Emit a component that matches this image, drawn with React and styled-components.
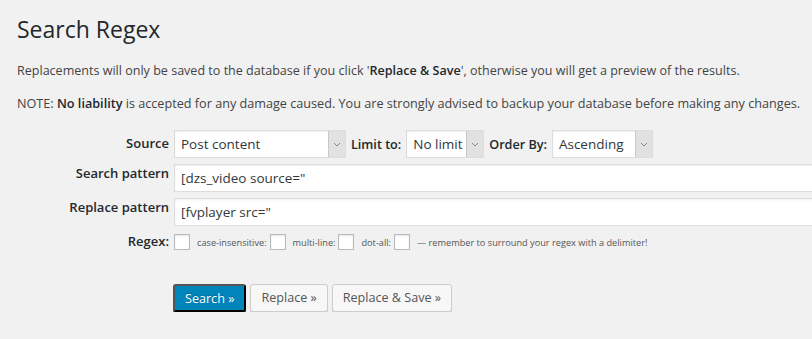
import React from 'react'
import styled, { createGlobalStyle } from 'styled-components'

const GlobalStyle = createGlobalStyle`
body {
  margin: 0;
  background: #f1f1f1;
  font-family: "Open Sans", "Noto Sans", sans-serif;
  color: #444;
  overflow: hidden;
}
`

const Wrap = styled.div`
padding: 13px 0 0 17px;
width: 795px;
overflow: hidden;
`

const Title = styled.h1`
margin: 0;
font-size: 23px;
font-weight: 400;
line-height: 33px;
color: #23282d;
`

const Note = styled.p`
margin: ${p => p.first ? '15px' : '14px'} 0 0;
font-size: ${p => p.first ? '12.55px' : '12.65px'};
line-height: 19px;
white-space: nowrap;
color: #444;
b { font-weight: 600; color: #23282d; }
`

const FormGrid = styled.div`
margin-top: 17px;
display: grid;
grid-template-columns: 152px 1fr;
column-gap: 5px;
row-gap: 6px;
align-items: start;
`

const Label = styled.div`
text-align: right;
font-size: 13px;
font-weight: 600;
color: #23282d;
line-height: 19px;
padding-top: ${p => p.top || 0}px;
`

const Inline = styled.div`
display: flex;
align-items: center;
gap: 5px;
`

const InlineLabel = styled.span`
font-size: 12.6px;
font-weight: 600;
color: #23282d;
`

const SelectBox = styled.div`
width: ${p => p.w}px;
height: 28px;
box-sizing: border-box;
display: flex;
align-items: center;
background: #fff;
border: 1px solid #ddd;
box-shadow: inset 0 1px 2px rgba(0,0,0,.07);
font-size: 13.5px;
color: #32373c;
`

const SelectText = styled.span`
flex: 1;
padding-left: 6px;
white-space: nowrap;
overflow: hidden;
`

const Arrow = styled.span`
width: 16px;
height: 26px;
display: flex;
align-items: center;
justify-content: center;
background: #e1e1e1;
border-left: 1px solid #c8c8c8;
`

const TextInput = styled.div`
width: 660px;
height: 28px;
box-sizing: border-box;
display: flex;
align-items: center;
padding-left: 6px;
background: #fff;
border: 1px solid #ddd;
box-shadow: inset 0 1px 2px rgba(0,0,0,.07);
font-size: 13.5px;
color: #32373c;
`

const Checks = styled.div`
display: flex;
align-items: center;
padding-top: 2px;
`

const Check = styled.span`
width: 16px;
height: 16px;
box-sizing: border-box;
background: #fff;
border: 1px solid #b4b9be;
box-shadow: inset 0 1px 2px rgba(0,0,0,.1);
margin-right: 7px;
`

const Small = styled.span`
font-size: 9.2px;
color: #555;
margin-right: 3px;
`

const Buttons = styled.div`
display: flex;
gap: 4px;
margin: 33px 0 0 156px;
`

const Button = styled.button`
height: 28px;
padding: 0 10px 1px;
border-radius: 3px;
font-family: inherit;
font-size: 12.6px;
line-height: 26px;
cursor: pointer;
background: ${p => p.primary ? '#0085ba' : '#f7f7f7'};
border: 1px solid ${p => p.primary ? '#0073aa #006799 #006799' : '#ccc'};
box-shadow: 0 1px 0 ${p => p.primary ? '#006799' : '#ccc'};
color: ${p => p.primary ? '#fff' : '#555'};
text-shadow: ${p => p.primary ? '0 -1px 1px #006799' : 'none'};
`

function Chevron() {
  return (
    <svg width="8" height="5" viewBox="0 0 8 5">
      <path d="M1 1l3 3 3-3" fill="none" stroke="#888" strokeWidth="1" />
    </svg>
  )
}

function Select({ w, value }) {
  return (
    <SelectBox w={w}>
      <SelectText>{value}</SelectText>
      <Arrow><Chevron /></Arrow>
    </SelectBox>
  )
}

export default function App() {
  return (
    <Wrap>
      <GlobalStyle />
      <Title>Search Regex</Title>
      <Note first>
        Replacements will only be saved to the database if you click '<b>Replace &amp; Save</b>', otherwise you will get a preview of the results.
      </Note>
      <Note>
        NOTE: <b>No liability</b> is accepted for any damage caused. You are strongly advised to backup your database before making any changes.
      </Note>
      <FormGrid>
        <Label top={4}>Source</Label>
        <Inline>
          <Select w={172} value="Post content" />
          <InlineLabel>Limit to:</InlineLabel>
          <Select w={78} value="No limit" />
          <InlineLabel>Order By:</InlineLabel>
          <Select w={101} value="Ascending" />
        </Inline>
        <Label>Search pattern</Label>
        <TextInput>[dzs_video source="</TextInput>
        <Label>Replace pattern</Label>
        <TextInput>[fvplayer src="</TextInput>
        <Label>Regex:</Label>
        <Checks>
          <Check />
          <Small>case-insensitive:</Small>
          <Check />
          <Small>multi-line:</Small>
          <Check />
          <Small>dot-all:</Small>
          <Check />
          <Small>— remember to surround your regex with a delimiter!</Small>
        </Checks>
      </FormGrid>
      <Buttons>
        <Button primary>Search »</Button>
        <Button>Replace »</Button>
        <Button>Replace &amp; Save »</Button>
      </Buttons>
    </Wrap>
  )
}
